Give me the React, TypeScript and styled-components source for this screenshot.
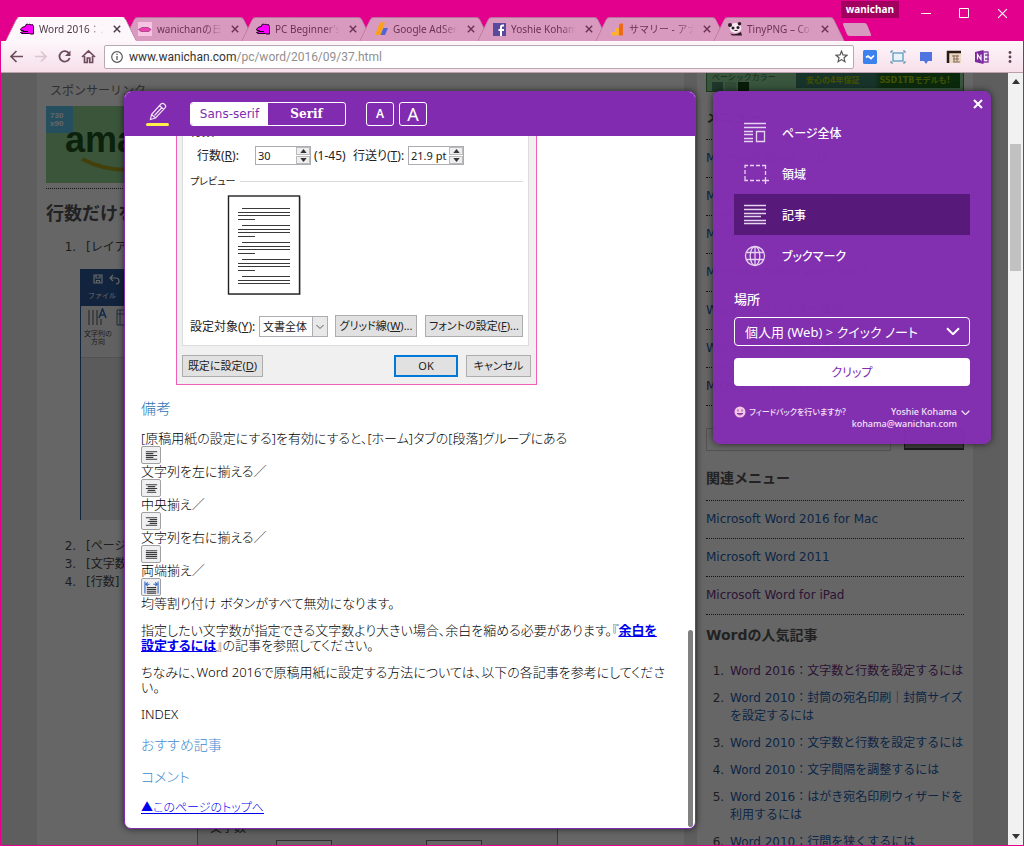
import React from "react";
import styled, { createGlobalStyle, css } from "styled-components";

const PINK = "#e3008c";
const PURPLE = "#812bb0";
const uiFont = `"Noto Sans", "Noto Sans CJK JP", sans-serif`;
const pageFont = `"DejaVu Sans", "Noto Sans CJK JP", sans-serif`;

const GlobalStyle = createGlobalStyle`
  * { box-sizing: border-box; }
  html, body { margin: 0; padding: 0; }
  body { font-family: ${uiFont}; font-size: 12px; color: #000; overflow: hidden; }
  button, input, select { font: inherit; color: inherit; margin: 0; padding: 0; }
  button { border: 0; background: none; cursor: pointer; }
  h2, h3, p, ul, ol { margin: 0; padding: 0; }
  svg { display: block; flex: none; }
`;

/* ---------- browser frame ---------- */

const Window = styled.div`
  height: 100vh;
  display: flex;
  flex-direction: column;
  background: ${PINK};
`;

const TitleBar = styled.header`
  display: flex;
  height: 41px;
  padding-left: 11px;
  flex: none;
`;

const TabList = styled.div`
  display: flex;
  align-items: flex-end;
`;

const Tab = styled.div<{ $active?: boolean }>`
  position: relative;
  z-index: ${(p) => (p.$active ? 2 : 1)};
  display: flex;
  align-items: center;
  width: 118px;
  height: 24px;
  padding: 0 4px 0 8px;
  gap: 4px;
  color: ${(p) => (p.$active ? "#4b3a44" : "#6b3355")};
  &::before,
  &::after {
    content: "";
    position: absolute;
    z-index: -1;
    top: 0;
    bottom: 0;
    background: ${(p) => (p.$active ? "#fdf6fa" : "#d99abf")};
    border-top: 1px solid ${(p) => (p.$active ? "#fff" : "#b8709b")};
  }
  &::before {
    left: 0;
    right: 40%;
    transform: skewX(-26deg);
    border-left: 1px solid #b8709b;
    border-top-left-radius: 3px;
  }
  &::after {
    left: 40%;
    right: -2px;
    transform: skewX(26deg);
    border-right: 1px solid #b8709b;
    border-top-right-radius: 3px;
  }
`;

const TabTitle = styled.span`
  flex: 1;
  overflow: hidden;
  white-space: nowrap;
  font-size: 10px;
  line-height: 16px;
  mask-image: linear-gradient(90deg, #000 75%, transparent 98%);
`;

const TabClose = styled.button`
  display: flex;
  padding: 4px;
`;

const NewTab = styled.button`
  width: 24px;
  height: 13px;
  margin: 23px -29px 0 8px;
  background: #d99abf;
  transform: skewX(22deg);
  border-radius: 2px;
`;

const Profile = styled.div`
  margin: 1px 0 0 auto;
  height: 17px;
  padding: 0 5px;
  background: #a1005f;
  color: #fff;
  font-weight: 700;
  font-size: 10px;
  line-height: 17px;
`;

const WindowButtons = styled.div`
  display: flex;
  gap: 28px;
  padding: 8px 16px 0 22px;
  height: 24px;
  color: #fff;
`;

const Toolbar = styled.nav`
  display: flex;
  align-items: center;
  height: 32px;
  flex: none;
  margin: 0 1px;
  padding: 0 5px 0 8px;
  background: linear-gradient(#fdf6fa, #f7dfe9);
  border-bottom: 1px solid #b9a0ad;
  color: #6e4c5f;
`;

const NavButtons = styled.div`
  display: flex;
  gap: 9px;
  margin-right: 8px;
`;

const AddressBar = styled.label`
  flex: 1;
  display: flex;
  align-items: center;
  gap: 6px;
  height: 24px;
  padding: 0 5px 0 6px;
  background: #fff;
  border: 1px solid #b9a9b1;
  border-radius: 2px;
  color: #5a5a5a;
`;

const Url = styled.span`
  flex: 1;
  font-family: Roboto, sans-serif;
  font-size: 12px;
  line-height: 18px;
  color: #8f8f8f;
  b {
    font-weight: 400;
    color: #333;
  }
`;

const Extensions = styled.div`
  display: flex;
  gap: 12px;
  margin-left: 8px;
`;

const Viewport = styled.div`
  position: relative;
  flex: 1;
  min-height: 0;
  display: flex;
  margin: 0 1px 1px;
  overflow: hidden;
`;

const ScrollTrack = styled.div`
  width: 15px;
  flex: none;
  display: flex;
  flex-direction: column;
  align-items: center;
  background: #f1f1f1;
  padding: 6px 0;
`;

const ScrollThumb = styled.div`
  width: 11px;
  height: 127px;
  margin-top: 60px;
  background: #c1c1c1;
`;

const ScrollEnd = styled.div`
  margin-top: auto;
`;

/* ---------- web page under the clipper ---------- */

const Page = styled.div`
  position: relative;
  flex: 1;
  min-width: 0;
  overflow: hidden;
  background: #ececec;
  font-family: ${pageFont};
  color: #4a4a4a;
`;

const Columns = styled.div`
  display: grid;
  grid-template-columns: 1fr 276px;
  gap: 13px;
  height: 100%;
  margin: 0 35px 0 36px;
`;

const Main = styled.main`
  background: #fff;
  padding: 9px;
  line-height: 18px;
  overflow: hidden;
`;

const AdLabel = styled.p`
  padding-left: 4px;
  color: #777;
`;

const Banner = styled.div`
  height: 77px;
  margin-top: 6px;
  background: #93d494;
  display: flex;
`;

const BannerSize = styled.span`
  width: 27px;
  height: 27px;
  padding: 6px 4px;
  background: #5cc4ea;
  color: #fff;
  font: 700 8px/8px "Liberation Sans", sans-serif;
`;

const BannerLogo = styled.span`
  margin: 14px 0 0 -8px;
  color: #1f5420;
  font: 700 36px/40px "Liberation Sans", sans-serif;
  svg {
    margin: -2px 0 0 16px;
  }
`;

const dotted = "1px dotted #333";

const Heading = styled.h2<{ $large?: boolean }>`
  font-size: ${(p) => (p.$large ? 18 : 14)}px;
  line-height: 20px;
  font-weight: 700;
  color: #555;
`;

const MainHeading = styled(Heading)`
  margin-top: 5px;
  padding-top: 15px;
  border-top: ${dotted};
`;

const MenuHeading = styled(Heading)`
  margin-top: 15px;
`;

const Steps = styled.ol`
  margin-top: 14px;
  padding-left: 34px;
  li {
    padding-left: 6px;
  }
`;

const RibbonShot = styled.div`
  height: 251px;
  margin: 13px 0 17px -6px;
  border: 1px solid #2b579a;
  border-width: 0 0 0 1px;
  background: #e4e4e4;
`;

const RibbonTop = styled.div`
  height: 37px;
  padding: 4px 12px 4px 7px;
  background: #2b579a;
  color: #fff;
  font-size: 7px;
  line-height: 16px;
  svg {
    margin: 0 0 3px 5px;
  }
`;

const RibbonTools = styled.div`
  height: 52px;
  padding: 2px 3px;
  background: #f3f3f3;
  border-bottom: 1px solid #ccc;
  font-size: 7px;
  line-height: 8px;
  span {
    display: block;
    width: 28px;
    text-align: center;
    white-space: nowrap;
    margin-top: 2px;
  }
`;

const LowerShot = styled.div`
  width: 361px;
  height: 40px;
  margin: 230px 0 0 151px;
  padding: 0 12px;
  border: solid #ff4fb8;
  border-width: 0 1px;
  background: #f0f0f0;
  line-height: 14px;
`;

const LowerFields = styled.div`
  display: flex;
  gap: 94px;
  padding: 5px 0 0 66px;
  span {
    width: 56px;
    height: 20px;
    border: 1px solid #777;
    background: #fff;
  }
`;

const Side = styled.aside`
  background: #fff;
  padding: 0 9px;
  overflow: hidden;
`;

const SideBanner = styled.div`
  display: flex;
  height: 19px;
  background: #8fd49a;
  border: 1px solid #3f8f45;
  border-width: 0 1px 1px;
  color: #35703a;
  font-size: 8px;
  line-height: 9px;
`;

const Swatches = styled.div`
  width: 89px;
  padding-left: 5px;
  > div {
    display: flex;
    gap: 2px;
  }
  i {
    width: 11px;
    height: 10px;
  }
`;

const Swatch = styled.i<{ $color: string }>`
  background: ${(p) => p.$color};
`;

const Claims = styled.div`
  flex: 1;
  display: flex;
  justify-content: space-around;
  align-items: center;
  height: 15px;
  background: linear-gradient(90deg, #3c7f6a 48%, #1d6a22 52%);
  color: #a8c800;
  font-weight: 700;
  margin-right: 3px;
`;

const LinkList = styled.ul`
  margin: 12px 0 22px;
  list-style: none;
  border-top: ${dotted};
  li {
    height: 38px;
    line-height: 37px;
    border-bottom: ${dotted};
  }
`;

const RelatedList = styled(LinkList)`
  margin-bottom: 10px;
`;

const PageLink = styled.a<{ $visited?: boolean }>`
  color: ${(p) => (p.$visited ? "#6c3284" : "#2460b0")};
  text-decoration: none;
`;

const Search = styled.form`
  display: flex;
  gap: 13px;
  margin-bottom: 17px;
  input {
    flex: 1;
    min-width: 0;
    height: 23px;
    padding: 0 28px;
    border: 1px solid #ccc;
    background: #fff;
  }
  button {
    width: 60px;
    height: 22px;
    display: grid;
    place-items: center;
    background: #999;
    border: 1px solid #444;
    border-bottom-width: 2px;
    color: #fff;
  }
`;

const Popular = styled.ol`
  margin-top: 17px;
  padding-left: 22px;
  line-height: 18px;
  li {
    padding-left: 2px;
    margin-bottom: 9px;
  }
`;

const Dim = styled.div`
  position: absolute;
  inset: 0;
  background: rgba(0, 0, 0, 0.6);
`;

/* ---------- article reader ---------- */

const panel = css`
  position: absolute;
  top: 18px;
  border-radius: 7px;
  overflow: hidden;
  box-shadow: 0 0 7px rgba(0, 0, 0, 0.65);
`;

const Reader = styled.section`
  ${panel}
  left: 123px;
  right: 327px;
  bottom: 16px;
  display: flex;
  flex-direction: column;
  border: 1px solid ${PURPLE};
  background: #fff;
`;

const ReaderBar = styled.div`
  display: flex;
  align-items: center;
  height: 44px;
  flex: none;
  padding-left: 20px;
  background: ${PURPLE};
  color: #fff;
`;

const Segmented = styled.div`
  display: flex;
  width: 156px;
  height: 24px;
  margin: 0 20px 0 21px;
  border: 1px solid #fff;
  border-radius: 3px;
  overflow: hidden;
`;

const Segment = styled.button<{ $on?: boolean }>`
  flex: 1;
  font-size: 12px;
  line-height: 22px;
  font-family: ${(p) => (p.$on ? `"DejaVu Sans", sans-serif` : `"DejaVu Serif", serif`)};
  font-weight: ${(p) => (p.$on ? 400 : 700)};
  background: ${(p) => (p.$on ? "#fff" : "transparent")};
  color: ${(p) => (p.$on ? PURPLE : "#fff")};
`;

const SizeButton = styled.button<{ $big?: boolean }>`
  width: 28px;
  height: 24px;
  margin-right: 5px;
  border: 1px solid #fff;
  border-radius: 3px;
  color: #fff;
  font-size: ${(p) => (p.$big ? 18 : 12)}px;
  font-weight: ${(p) => (p.$big ? 400 : 600)};
  line-height: 20px;
`;

const Article = styled.article`
  flex: 1;
  min-height: 0;
  overflow: hidden;
  padding: 0 16px;
  font-size: 13px;
  font-weight: 300;
  line-height: 15px;
  font-feature-settings: "palt";
  p {
    margin-bottom: 12px;
  }
  a {
    color: #0000ee;
  }
  b {
    font-weight: 700;
  }
`;

const ArticleHeading = styled.h3<{ $light?: boolean }>`
  margin: 14px 0;
  font-weight: 300;
  font-size: ${(p) => (p.$light ? 14 : 15)}px;
  line-height: 18px;
  color: ${(p) => (p.$light ? "#3f8ad0" : "#2e74b5")};
`;

const TopLink = styled.a`
  font-size: 12px;
`;

const AlignIcon = styled.span`
  display: block;
  width: 20px;
  height: 18px;
  padding: 1px 2px;
  border: 1px solid #a0a0a0;
  border-radius: 2px;
  background: #f0f0f3;
`;

const ArticleThumb = styled.div`
  position: absolute;
  right: 2px;
  bottom: 1px;
  width: 5px;
  height: 197px;
  border-radius: 3px;
  background: #808080;
`;

const Dialog = styled.div`
  width: 361px;
  margin-left: 35px;
  padding: 0 5px 7px;
  border: solid #ee5fb5;
  border-width: 0 1px 1px;
  background: #f0f0f0;
  font-size: 12px;
  font-weight: 400;
  color: #222;
`;

const DialogPage = styled.div`
  margin-right: 2px;
  padding: 0 5px 9px 7px;
  border: 1px solid #dcdcdc;
  border-top: 0;
  background: #fff;
`;

const ClippedLine = styled.div`
  display: flex;
  align-items: flex-end;
  height: 2px;
  overflow: hidden;
  line-height: 12px;
`;

const DialogRow = styled.div<{ $top: number; $indent?: boolean }>`
  display: flex;
  align-items: center;
  height: 20px;
  margin-top: ${(p) => p.$top}px;
  padding-left: ${(p) => (p.$indent ? 7 : 0)}px;
  white-space: nowrap;
`;

const FieldLabel = styled.label<{ $w: number }>`
  width: ${(p) => p.$w}px;
`;

const PitchLabel = styled(FieldLabel)`
  margin-left: auto;
`;

const RowEnd = styled.span`
  width: 56px;
`;

const Spin = styled.div`
  display: flex;
  width: 56px;
  height: 19px;
  margin-right: 3px;
  border: 1px solid #abadb3;
  background: #fff;
  input {
    width: 40px;
    padding-left: 2px;
    border: 0;
    outline: 0;
    font-size: 11px;
  }
  div {
    display: flex;
    flex-direction: column;
    gap: 1px;
    width: 14px;
  }
  button {
    flex: 1;
    display: grid;
    place-items: center;
    background: #eee;
    border: 1px solid #bbb;
  }
`;

const Legend = styled.div`
  display: flex;
  align-items: center;
  gap: 5px;
  height: 16px;
  margin: 8px 0 6px;
  font-size: 10px;
  &::after {
    content: "";
    flex: 1;
    height: 1px;
    background: #dcdcdc;
  }
`;

const PaperDrawing = styled.svg`
  margin-left: 35px;
`;

const DialogSelect = styled.div`
  position: relative;
  width: 69px;
  height: 21px;
  margin-right: 7px;
  select {
    appearance: none;
    width: 100%;
    height: 100%;
    padding-left: 3px;
    border: 1px solid #abadb3;
    border-radius: 0;
    background: #fff;
    font-size: 11px;
  }
  svg {
    position: absolute;
    top: 0;
    right: 0;
    pointer-events: none;
  }
`;

const DialogButton = styled.button<{ $w: number; $primary?: boolean }>`
  width: ${(p) => p.$w}px;
  height: 22px;
  font-size: 11px;
  line-height: 18px;
  background: #e1e1e1;
  border: ${(p) => (p.$primary ? "2px solid #0078d7" : "1px solid #adadad")};
`;

const FontButton = styled(DialogButton)`
  margin-left: auto;
`;

const DialogFooter = styled.div`
  display: flex;
  gap: 8px;
  margin-top: 9px;
  button:first-child {
    margin-right: auto;
  }
`;

/* ---------- clipper panel ---------- */

const Clipper = styled.section`
  ${panel}
  right: 32px;
  width: 278px;
  height: 353px;
  padding: 21px 21px 0;
  background: rgba(131, 46, 178, 0.97);
  color: #fff;
  font-feature-settings: "palt";
`;

const ClipperClose = styled.button`
  position: absolute;
  top: 8px;
  right: 8px;
  color: #fff;
`;

const Mode = styled.button<{ $on?: boolean }>`
  display: flex;
  align-items: center;
  gap: 16px;
  width: 100%;
  height: 41px;
  padding-left: 10px;
  background: ${(p) => (p.$on ? "#571a7b" : "transparent")};
  color: #fff;
  font-size: 12px;
  font-weight: 500;
`;

const PlaceLabel = styled.label`
  display: block;
  margin: 13px 0 8px;
  font-size: 13px;
  line-height: 20px;
  font-weight: 500;
`;

const Place = styled.div`
  position: relative;
  height: 29px;
  select {
    appearance: none;
    width: 100%;
    height: 100%;
    padding-left: 10px;
    border: 1px solid #fff;
    border-radius: 4px;
    background: transparent;
    color: #fff;
    font-size: 13px;
  }
  svg {
    position: absolute;
    top: 10px;
    right: 10px;
    pointer-events: none;
  }
`;

const ClipButton = styled.button`
  width: 100%;
  height: 28px;
  margin: 12px 0 20px;
  border-radius: 4px;
  background: #fff;
  color: ${PURPLE};
  font-size: 12px;
`;

const ClipperFooter = styled.footer`
  display: flex;
  justify-content: space-between;
  line-height: 12px;
`;

const Feedback = styled.a`
  display: flex;
  gap: 3px;
  color: #f3e3fa;
  text-decoration: none;
  font-size: 8px;
  font-weight: 500;
`;

const Account = styled.button`
  display: flex;
  gap: 4px;
  text-align: right;
  color: #f3e3fa;
  font-size: 9px;
  font-weight: 500;
  line-height: 12px;
  white-space: nowrap;
  svg {
    margin-top: 4px;
  }
`;

/* ---------- drawings ---------- */

const Croc = () => (
  <svg width="16" height="16" viewBox="0 0 16 16">
    <path d="M1.500 8 4 6 6.500 5.500 7 3.500 8.500 3 9.500 4 10.500 3 12 4 13.500 3.500 14.500 5.500V13H11.500L10.500 12.500H3L1.500 11.500 4.500 10.500V9.500H2Z" fill="#f0f" stroke="#200020" strokeWidth="1" />
    <path d="M4 10.500h5" stroke="#200020" />
  </svg>
);

const favicons: Record<string, React.ReactNode> = {
  croc: <Croc />,
  diary: (
    <svg width="16" height="16" viewBox="0 0 16 16">
      <path d="M1 1h14v14H1z" fill="#f6c4e2" />
      <path d="M1.500 8.500 5 6.500h6l3 2-2 2H4z" fill="#ee3fb4" stroke="#7d2c62" strokeWidth=".6" />
    </svg>
  ),
  adsense: (
    <svg width="16" height="16" viewBox="0 0 16 16">
      <path d="M7 1.500h5L7.500 14H2z" fill="#f9a11b" />
      <path d="M10.500 7H15l-3 7H7.500z" fill="#5166d6" />
    </svg>
  ),
  facebook: (
    <svg width="16" height="16" viewBox="0 0 16 16">
      <rect x="2" y="2" width="13" height="13" fill="#5a4a9e" />
      <path d="M13 4.500h-1.500q-1.500 0-1.500 1.500v9M7.500 9H13" fill="none" stroke="#fff" strokeWidth="2" />
    </svg>
  ),
  analytics: (
    <svg width="16" height="16" viewBox="0 0 16 16">
      <path d="M2 11h5v3.500H3L2 13.500zM6 7h5v7.500H6z" fill="#fbb034" />
      <path d="M10 4l1.500-1.500H14V14.500h-4z" fill="#ee6a1b" />
    </svg>
  ),
  panda: (
    <svg width="16" height="16" viewBox="0 0 16 16">
      <ellipse cx="8.500" cy="7" rx="5.800" ry="5" fill="#f6e6ef" />
      <circle cx="3" cy="4" r="2" fill="#2a1a24" />
      <circle cx="12.500" cy="2.800" r="1.800" fill="#2a1a24" />
      <circle cx="6" cy="7" r="1.500" fill="#2a1a24" />
      <circle cx="11" cy="6.500" r="1.500" fill="#2a1a24" />
      <path d="M3 12q4 3 11-1l1 3.500H5z" fill="#2a1a24" />
      <path d="M7.500 9.500h3" stroke="#2a1a24" />
    </svg>
  ),
};

const Cross = ({ size, weight }: { size: number; weight: number }) => (
  <svg width={size} height={size} viewBox="0 0 10 10">
    <path d="M1 1l8 8M9 1l-8 8" stroke="currentColor" strokeWidth={weight} />
  </svg>
);

const Chevron = ({ width }: { width: number }) => (
  <svg width={width} height={width * 0.6} viewBox="0 0 14 8">
    <path d="M1 1l6 6 6-6" fill="none" stroke="currentColor" strokeWidth="2" />
  </svg>
);

const Glyph = ({ d }: { d: string }) => (
  <svg width="15" height="15" viewBox="0 0 15 15">
    <path d={d} fill="none" stroke="currentColor" strokeWidth="1.700" />
  </svg>
);

const modeIcons = {
  page: <path d="M0 1.500h22M0 5.500h22M0 9.500h9M0 12.500h9M0 16.500h9M12.500 9.500h8v10h-8zM0 19.500h9" />,
  region: <path d="M1 5V2.500h3M6 2.500h4M12 2.500h4M18 2.500h3.500V6M21.500 8v4M1 7v4M1 13v4.500h3M6 17.500h4M12 17.500h4M18 17.500h7M21.500 14v7" />,
  article: <path d="M0 1.500h22M0 5.500h22M0 9.500h22M0 12.500h17M0 16.500h22M0 19.500h22" />,
  globe: (
    <>
      <circle cx="11" cy="11" r="9.500" />
      <ellipse cx="11" cy="11" rx="4.800" ry="9.500" />
      <path d="M11 1.500v19M2.500 7.500h17M2.500 14.500h17" />
    </>
  ),
};

const ModeIcon = ({ name }: { name: keyof typeof modeIcons }) => (
  <svg width="22" height="22" viewBox="0 0 22 22" fill="none" stroke="#e6d3f0" strokeWidth="1.300" overflow="visible">
    {modeIcons[name]}
  </svg>
);

const alignPaths: Record<string, string> = {
  left: "M2 3.500h12M2 5.500h8M2 7.500h12M2 9.500h8M2 11.500h12",
  center: "M2 3.500h12M4 5.500h8M2 7.500h12M4 9.500h8M3 11.500h10",
  right: "M2 3.500h12M6 5.500h8M4 7.500h10M6 9.500h8M2 11.500h12",
  justify: "M2 3.500h12M2 5.500h12M2 7.500h12M2 9.500h12M2 11.500h12",
  spread: "M3 7.500h10M3 9.500h10M3 11.500h10M3 13.500h10",
};

const AlignMark = ({ kind }: { kind: string }) => (
  <AlignIcon>
    <svg width="15" height="15" viewBox="0 0 16 15">
      <path d={alignPaths[kind]} stroke="#3a3a3a" strokeWidth="1.300" />
      {kind === "spread" && (
        <path d="M1 1v13M15 1v13M2 4h4M4 2 2 4l2 2M14 4h-4M12 2l2 2-2 2" fill="none" stroke="#3b6fc4" strokeWidth="1.200" />
      )}
    </svg>
  </AlignIcon>
);

const Arrow = ({ up, size = 7 }: { up?: boolean; size?: number }) => (
  <svg width={size} height={size - 3} viewBox="0 0 8 5">
    <path d={up ? "M0 5h8L4 0z" : "M0 0h8L4 5z"} fill="#333" />
  </svg>
);

const PreviewPaper = () => {
  const lines: string[] = [];
  for (let block = 0; block < 5; block++) {
    const y = 17.5 + block * 17;
    lines.push(`M16 ${y}h48M12 ${y + 4}h52M12 ${y + 7}h52`);
    if (block < 4) lines.push(`M12 ${y + 11}h17`);
  }
  return (
    <PaperDrawing width="80" height="100" viewBox="0 0 80 100">
      <rect x="4" y="2" width="72" height="98" fill="#ccc" />
      <rect x="3.500" y="1" width="71" height="98" fill="#fff" stroke="#222" strokeWidth="1.400" />
      <path d={lines.join("")} stroke="#3a3a3a" strokeWidth="1.200" transform="translate(1 -4)" />
    </PaperDrawing>
  );
};

/* ---------- content ---------- */

const tabs = [
  { icon: "croc", title: "Word 2016：ス" },
  { icon: "diary", title: "wanichanの日記" },
  { icon: "croc", title: "PC Beginner's" },
  { icon: "adsense", title: "Google AdSens" },
  { icon: "facebook", title: "Yoshie Kohama" },
  { icon: "analytics", title: "サマリー - アナリ" },
  { icon: "panda", title: "TinyPNG – Com" },
];

const menu = [
  { text: "Microsoft Word 2016" },
  { text: "Microsoft Word 2013" },
  { text: "Microsoft Word 2010" },
  { text: "Microsoft Office Word 2007" },
  { text: "Word 2002マスター講座" },
  { text: "Word 2000マスター講座" },
  { text: "Microsoft Word FAQ", visited: true },
];

const related = [
  { text: "Microsoft Word 2016 for Mac" },
  { text: "Microsoft Word 2011" },
  { text: "Microsoft Word for iPad", visited: true },
];

const popular = [
  { text: "Word 2016：文字数と行数を設定するには", visited: true },
  { text: "Word 2010：封筒の宛名印刷｜封筒サイズを設定するには" },
  { text: "Word 2010：文字数と行数を設定するには" },
  { text: "Word 2010：文字間隔を調整するには" },
  { text: "Word 2016：はがき宛名印刷ウィザードを利用するには" },
  { text: "Word 2010：行間を狭くするには" },
];

const Links = ({ items }: { items: { text: string; visited?: boolean }[] }) => (
  <>
    {items.map((item) => (
      <li key={item.text}>
        <PageLink href="#" $visited={item.visited}>
          {item.text}
        </PageLink>
      </li>
    ))}
  </>
);

const Spinner = ({ id, value }: { id: string; value: string }) => (
  <Spin>
    <input id={id} defaultValue={value} />
    <div>
      <button aria-label="増やす"><Arrow up /></button>
      <button aria-label="減らす"><Arrow /></button>
    </div>
  </Spin>
);

const Chrome = () => (
  <>
    <TitleBar>
      <TabList>
        {tabs.map((tab, i) => (
          <Tab key={tab.title} $active={i === 0}>
            {favicons[tab.icon]}
            <TabTitle>{tab.title}</TabTitle>
            <TabClose aria-label="閉じる"><Cross size={8} weight={1.8} /></TabClose>
          </Tab>
        ))}
      </TabList>
      <NewTab aria-label="新しいタブ" />
      <Profile>wanichan</Profile>
      <WindowButtons>
        <svg width="10" height="10" viewBox="0 0 10 10"><path d="M0 5.500h10" stroke="#fff" /></svg>
        <svg width="10" height="10" viewBox="0 0 10 10"><path d="M.5.5h9v9h-9z" fill="none" stroke="#fff" /></svg>
        <Cross size={11} weight={1} />
      </WindowButtons>
    </TitleBar>
    <Toolbar>
      <NavButtons>
        <Glyph d="M14 7.500H2M7.500 2 2 7.500 7.500 13" />
        <svg width="15" height="15" viewBox="0 0 15 15">
          <path d="M2 7.500h11M8 2.500l5 5-5 5" fill="none" stroke="#dcc3d0" strokeWidth="1.700" />
        </svg>
        <svg width="15" height="15" viewBox="0 0 15 15">
          <path d="M12 4.500A5.200 5.200 0 1 0 12.600 9" fill="none" stroke="currentColor" strokeWidth="1.800" />
          <path d="M13.500 1.500v5.500H8z" fill="currentColor" />
        </svg>
        <Glyph d="M1 8l6.500-6L14 8M3.500 7v6.500h2.800V9h2.500v4.500h2.800V7" />
      </NavButtons>
      <AddressBar>
        <svg width="12" height="12" viewBox="0 0 12 12">
          <circle cx="6" cy="6" r="5.300" fill="none" stroke="currentColor" strokeWidth="1.200" />
          <path d="M6 5v4M6 2.800v1.300" stroke="currentColor" strokeWidth="1.300" />
        </svg>
        <Url><b>www.wanichan.com</b>/pc/word/2016/09/37.html</Url>
        <svg width="13" height="13" viewBox="0 0 13 13">
          <path d="M6.500 1.200 8 4.900l4 .3-3 2.600.9 3.900-3.400-2.100-3.400 2.100L4 7.800 1 5.200l4-.3z" fill="none" stroke="#555" strokeWidth="1.200" />
        </svg>
      </AddressBar>
      <Extensions>
        <svg width="16" height="16" viewBox="0 0 16 16">
          <rect x="1" y="1" width="14" height="14" rx="1.500" fill="#3b82ee" />
          <path d="M4 8.500 6 7l3 2.500L12 6.500" fill="none" stroke="#fff" strokeWidth="1.700" />
        </svg>
        <svg width="16" height="16" viewBox="0 0 16 16">
          <rect x="3" y="4" width="10" height="8" fill="#e8f2f8" stroke="#5a9cc0" strokeWidth="1.300" />
          <path d="M1 4V2h2M13 2h2v2M15 12v2h-2M3 14H1v-2" fill="none" stroke="#4a86a8" />
        </svg>
        <svg width="16" height="16" viewBox="0 0 16 16">
          <path d="M2 3h12v9h-4l-2 3-2-3H2z" fill="#4f74e0" />
        </svg>
        <svg width="16" height="16" viewBox="0 0 16 16">
          <path d="M1 2h14v12H1z" fill="#ead9c4" />
          <path d="M1 3h14M2 2v12" stroke="#2a1a14" strokeWidth="2.500" />
          <path d="M6 7h7M7 10h6M7 13h7M8 6v7M11 6v7" stroke="#8a6a5a" />
        </svg>
        <svg width="16" height="16" viewBox="0 0 16 16">
          <path d="M9 3h5v10H9zM11 6h4M11 10h4" fill="#f3e8f7" stroke="#8a3fa8" strokeWidth="1.300" />
          <path d="M1 3l8.500-2v14L1 13z" fill="#7c2a9c" />
          <path d="M3.500 10.500v-5l3.500 5v-5" fill="none" stroke="#fff" strokeWidth="1.200" />
        </svg>
        <svg width="16" height="16" viewBox="0 0 16 16" fill="#5e4152">
          <circle cx="8" cy="3.500" r="1.400" />
          <circle cx="8" cy="8" r="1.400" />
          <circle cx="8" cy="12.500" r="1.400" />
        </svg>
      </Extensions>
    </Toolbar>
  </>
);

const WebPage = () => (
  <Page>
    <Columns>
      <Main>
        <AdLabel>スポンサーリンク</AdLabel>
        <Banner>
          <BannerSize>730<br />x90</BannerSize>
          <BannerLogo>
            amazon
            <svg width="90" height="16" viewBox="0 0 90 16">
              <path d="M1 1q38 20 84 3" fill="none" stroke="#a8a01c" strokeWidth="4" />
            </svg>
          </BannerLogo>
        </Banner>
        <MainHeading $large>行数だけを</MainHeading>
        <Steps>
          <li>
            [レイア
            <RibbonShot>
              <RibbonTop>
                <svg width="36" height="12" viewBox="0 0 36 12" fill="none" stroke="#fff" strokeWidth="1.200">
                  <path d="M1 2h8v8H1zM3 2v3h4V2M3.500 10V7.500h3V10M17 5h6q3 0 3 3t-3 3M20 2l-3 3 3 3M31 6h3" />
                </svg>
                ファイル
              </RibbonTop>
              <RibbonTools>
                <svg width="44" height="20" viewBox="0 0 44 20" fill="none">
                  <path d="M5 2v15M9 2v15M13 2v15M17 11v6" stroke="#555" />
                  <path d="M15 10l3.500-9L22 10M16 7h5" stroke="#2b6cb8" strokeWidth="1.600" />
                  <path d="M33 2h12v15H33zM36 2v15M33 6h12" stroke="#4a6a9a" />
                </svg>
                <span>文字列の<br />方向</span>
              </RibbonTools>
            </RibbonShot>
          </li>
          <li>[ページ</li>
          <li>[文字数</li>
          <li>[行数]</li>
        </Steps>
        <LowerShot>
          文字数
          <LowerFields><span /><span /></LowerFields>
        </LowerShot>
      </Main>
      <Side>
        <SideBanner>
          <Swatches>
            ベーシックカラー
            <div>
              <Swatch $color="#4d8a6a" />
              <Swatch $color="#7cc08a" />
              <Swatch $color="#144a18" />
            </div>
          </Swatches>
          <Claims><span>安心の4年保証</span><span>SSD1TBモデルも!</span></Claims>
        </SideBanner>
        <MenuHeading>メニュー</MenuHeading>
        <LinkList><Links items={menu} /></LinkList>
        <Search>
          <input aria-label="検索" />
          <button type="button" aria-label="検索">
            <svg width="12" height="12" viewBox="0 0 12 12" fill="none" stroke="#fff" strokeWidth="1.500">
              <circle cx="5" cy="5" r="3.500" /><path d="M8 8l3 3" />
            </svg>
          </button>
        </Search>
        <Heading>関連メニュー</Heading>
        <RelatedList><Links items={related} /></RelatedList>
        <Heading>Wordの人気記事</Heading>
        <Popular><Links items={popular} /></Popular>
      </Side>
    </Columns>
    <Dim />
  </Page>
);

const DialogShot = () => (
  <Dialog>
    <DialogPage>
      <ClippedLine>行数</ClippedLine>
      <DialogRow $top={7} $indent>
        <FieldLabel $w={58} htmlFor="lines">行数(<u>R</u>):</FieldLabel>
        <Spinner id="lines" value="30" />
        <span>(1-45)</span>
        <PitchLabel $w={55} htmlFor="pitch">行送り(<u>T</u>):</PitchLabel>
        <Spinner id="pitch" value="21.9 pt" />
        <RowEnd />
      </DialogRow>
      <Legend>プレビュー</Legend>
      <PreviewPaper />
      <DialogRow $top={21}>
        <FieldLabel $w={69} htmlFor="target">設定対象(<u>Y</u>):</FieldLabel>
        <DialogSelect>
          <select id="target"><option>文書全体</option></select>
          <svg width="16" height="21" viewBox="0 0 16 21">
            <path d="M.5.500h15v20H.5z" fill="#e8e8e8" stroke="#abadb3" />
            <path d="M4.500 9l3.500 3.500L11.500 9" fill="none" stroke="#555" />
          </svg>
        </DialogSelect>
        <DialogButton $w={82}>グリッド線(<u>W</u>)...</DialogButton>
        <FontButton $w={98}>フォントの設定(<u>F</u>)...</FontButton>
      </DialogRow>
    </DialogPage>
    <DialogFooter>
      <DialogButton $w={81}>既定に設定(<u>D</u>)</DialogButton>
      <DialogButton $w={64} $primary>OK</DialogButton>
      <DialogButton $w={65}>キャンセル</DialogButton>
    </DialogFooter>
  </Dialog>
);

const ArticleReader = () => (
  <Reader>
    <ReaderBar>
      <svg width="24" height="26" viewBox="0 0 24 26" fill="none">
        <path d="M6.500 13.500 16 3q1.500-1.500 3.500.2t.7 3.500L10.500 17 5.500 18.500zM14.500 4.500l4.200 4M6.500 13.500l4 3.500M9.500 14.500l7.500-8" stroke="#f0e2f6" strokeWidth="1.200" />
        <path d="M2.500 23.500h20" stroke="#fff04a" strokeWidth="3" strokeLinecap="round" />
      </svg>
      <Segmented>
        <Segment $on>Sans-serif</Segment>
        <Segment>Serif</Segment>
      </Segmented>
      <SizeButton aria-label="縮小">A</SizeButton>
      <SizeButton $big aria-label="拡大">A</SizeButton>
    </ReaderBar>
    <Article>
      <DialogShot />
      <ArticleHeading>備考</ArticleHeading>
      <p>
        [原稿用紙の設定にする]を有効にすると、[ホーム]タブの[段落]グループにある
        <AlignMark kind="left" />
        文字列を左に揃える／
        <AlignMark kind="center" />
        中央揃え／
        <AlignMark kind="right" />
        文字列を右に揃える／
        <AlignMark kind="justify" />
        両端揃え／
        <AlignMark kind="spread" />
        均等割り付け ボタンがすべて無効になります。
      </p>
      <p>
        指定したい文字数が指定できる文字数より大きい場合、余白を縮める必要があります。『
        <a href="#"><b>余白を<br />設定するには</b></a>』の記事を参照してください。
      </p>
      <p>
        ちなみに、Word 2016で原稿用紙に設定する方法については、以下の各記事を参考にしてくださ<br />い。
      </p>
      <p>INDEX</p>
      <ArticleHeading $light>おすすめ記事</ArticleHeading>
      <ArticleHeading $light>コメント</ArticleHeading>
      <p><TopLink href="#">▲このページのトップへ</TopLink></p>
    </Article>
    <ArticleThumb />
  </Reader>
);

const ClipperPanel = () => (
  <Clipper>
    <ClipperClose aria-label="閉じる"><Cross size={10} weight={2} /></ClipperClose>
    <Mode><ModeIcon name="page" />ページ全体</Mode>
    <Mode><ModeIcon name="region" />領域</Mode>
    <Mode $on><ModeIcon name="article" />記事</Mode>
    <Mode><ModeIcon name="globe" />ブックマーク</Mode>
    <PlaceLabel htmlFor="place">場所</PlaceLabel>
    <Place>
      <select id="place"><option>個人用 (Web) &gt; クイック ノート</option></select>
      <Chevron width={14} />
    </Place>
    <ClipButton>クリップ</ClipButton>
    <ClipperFooter>
      <Feedback href="#">
        <svg width="12" height="12" viewBox="0 0 12 12">
          <circle cx="6" cy="6" r="5.500" fill="#f2c6e4" />
          <path d="M4 3.500v2M8 3.500v2M3 7.500q3 3 6 0z" fill="none" stroke="#8a3aa8" />
        </svg>
        フィードバックを行いますか?
      </Feedback>
      <Account>
        <span>Yoshie Kohama<br />kohama@wanichan.com</span>
        <Chevron width={9} />
      </Account>
    </ClipperFooter>
  </Clipper>
);

export default function App() {
  return (
    <Window>
      <GlobalStyle />
      <Chrome />
      <Viewport>
        <WebPage />
        <ScrollTrack>
          <Arrow up size={8} />
          <ScrollThumb />
          <ScrollEnd><Arrow size={8} /></ScrollEnd>
        </ScrollTrack>
        <ArticleReader />
        <ClipperPanel />
      </Viewport>
    </Window>
  );
}
